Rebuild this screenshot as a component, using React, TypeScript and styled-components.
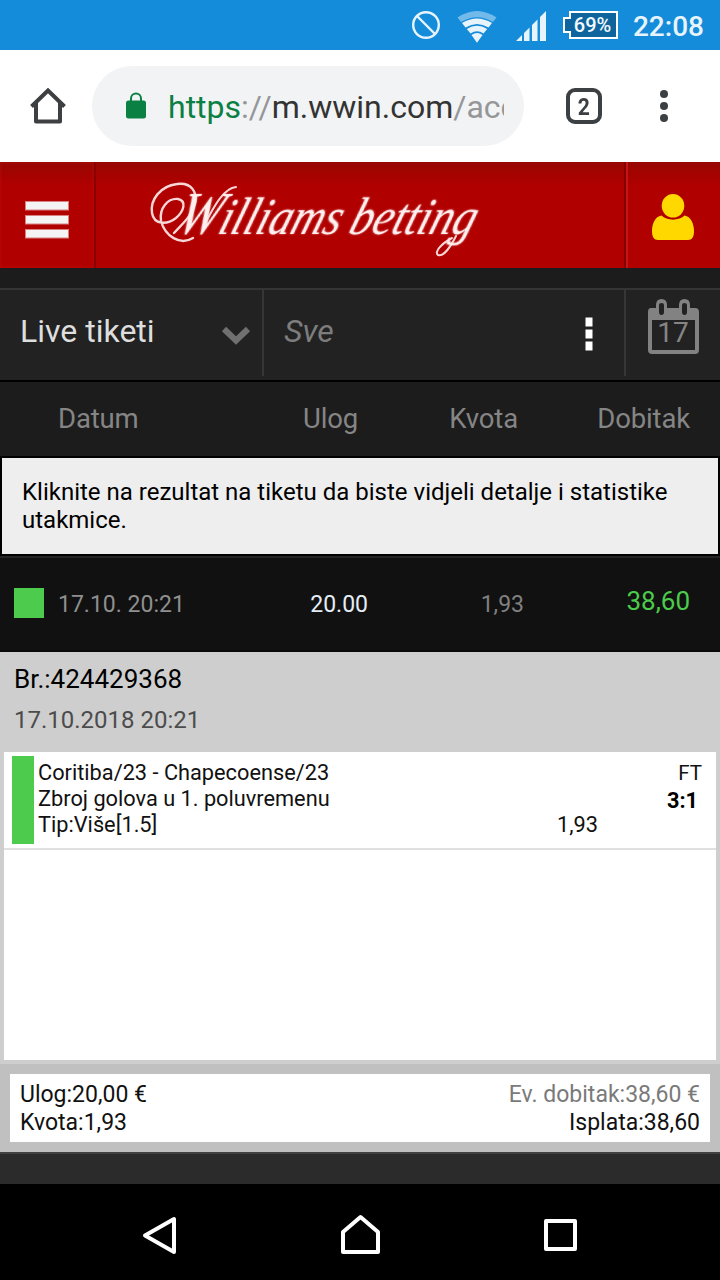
import React from "react";
import styled, { createGlobalStyle } from "styled-components";

const GlobalStyle = createGlobalStyle`
  *, *::before, *::after { box-sizing: border-box; }
  body { margin: 0; background: #000; font-family: Roboto, "Noto Sans", sans-serif; }
  svg { display: block; flex: none; }
`;

const Screen = styled.div`
  width: 720px;
  height: 1280px;
  display: flex;
  flex-direction: column;
  overflow: hidden;
  background: #2b2b2b;
`;

/* Android status bar */
const StatusBar = styled.header`
  height: 50px;
  flex: none;
  display: flex;
  align-items: center;
  justify-content: flex-end;
  padding-right: 16px;
  background: #148cda;
  color: #e8f4fc;
`;
const StatusIcons = styled.svg`
  width: 220px;
  height: 50px;
`;
const Clock = styled.span`
  margin-left: 13px;
  padding-top: 3px;
  font-size: 28px;
  font-weight: 500;
  line-height: 50px;
`;

/* Browser toolbar */
const BrowserBar = styled.div`
  height: 112px;
  flex: none;
  display: flex;
  align-items: center;
  background: #fff;
  padding-left: 30px;
`;
const AddressPill = styled.div`
  width: 432px;
  height: 80px;
  margin-left: 26px;
  padding: 0 20px 0 34px;
  display: flex;
  align-items: center;
  border-radius: 40px;
  background: #f1f3f5;
`;
const Url = styled.div`
  flex: 1;
  min-width: 0;
  margin-left: 22px;
  padding-top: 2px;
  overflow: hidden;
  white-space: nowrap;
  font-size: 32px;
  line-height: 44px;
  color: #333;
`;
const Scheme = styled.span`
  color: #0b8043;
`;
const Muted = styled.span`
  color: #959697;
`;
const TabCount = styled.div`
  width: 36px;
  height: 36px;
  margin-left: 42px;
  border: 4px solid #3c4043;
  border-radius: 9px;
  font: 700 24px/30px Roboto, sans-serif;
  text-align: center;
  color: #3c4043;
`;
const TabDigit = styled.span`
  display: inline-block;
  transform: scaleX(0.88);
`;
const DotsMenu = styled.svg`
  width: 8px;
  height: 36px;
  margin-left: 58px;
`;

/* Site header */
const SiteHeader = styled.div`
  height: 106px;
  flex: none;
  display: flex;
  background: linear-gradient(#960800, #a40300 12px, #b00000 24px);
`;
const HeaderButton = styled.div<{ $width: number }>`
  width: ${(p) => p.$width}px;
  display: flex;
  align-items: center;
  justify-content: center;
`;
const MenuButton = styled(HeaderButton)`
  border-right: 2px solid #8a0000;
  box-shadow: inset 0 0 4px rgba(220, 30, 30, 0.35);
  padding-top: 10px;
`;
const UserButton = styled(HeaderButton)`
  border-left: 2px solid #c51616;
  padding: 4px 2px 0 0;
`;
const Brand = styled.div`
  flex: 1;
  min-width: 0;
  border-right: 2px solid #860000;
`;

/* Filters */
const Filters = styled.div`
  height: 114px;
  flex: none;
  display: flex;
  background: #222;
  border-top: 20px solid #1c1c1c;
  border-bottom: 2px solid #000;
  box-shadow: inset 0 2px 0 #353535;
  padding-top: 2px;
`;
const Filter = styled.div<{ $width: number; $divider?: boolean }>`
  width: ${(p) => p.$width}px;
  height: 86px;
  display: flex;
  align-items: center;
  justify-content: space-between;
  padding-left: 20px;
  border-right: ${(p) => (p.$divider ? "2px solid #363636" : "0")};
`;
const FilterLabel = styled.span<{ $hint?: boolean }>`
  font-size: 32px;
  line-height: 38px;
  padding-bottom: 4px;
  color: ${(p) => (p.$hint ? "#7d7d7d" : "#dedede")};
  font-style: ${(p) => (p.$hint ? "italic" : "normal")};
`;

/* Ticket list */
const listColumns = "244px 128px 156px 162px";
const ListHead = styled.div`
  height: 76px;
  flex: none;
  display: grid;
  grid-template-columns: ${listColumns};
  align-items: center;
  padding-right: 30px;
  background: #1c1c1c;
  border-bottom: 2px solid #000;
`;
const HeadCell = styled.span<{ $align?: string }>`
  font-size: 27.5px;
  line-height: 34px;
  letter-spacing: -0.15px;
  color: #858585;
  text-align: ${(p) => p.$align ?? "left"};
`;
const OffsetHeadCell = styled(HeadCell)`
  padding-left: 58px;
`;
const KvotaHead = styled(HeadCell)`
  padding-right: 10px;
`;
const UlogHead = styled(HeadCell)`
  padding-right: 14px;
`;
const Notice = styled.p`
  height: 98px;
  flex: none;
  margin: 0;
  padding: 20px;
  border: 2px solid #000;
  border-top: 0;
  background: #eee;
  color: #000;
  font-size: 24px;
  line-height: 28px;
`;
const TicketRow = styled.div`
  height: 96px;
  flex: none;
  display: grid;
  grid-template-columns: 14px 44px 186px 128px 154px 164px;
  align-items: center;
  padding-right: 30px;
  background: #111;
  border-top: 2px solid #242424;
  border-bottom: 2px solid #090909;
`;
const Won = styled.span`
  grid-column: 2;
  width: 30px;
  height: 30px;
  margin-bottom: 2px;
  background: #4ccb4c;
`;
const Cell = styled.span<{ $color: string }>`
  padding-top: 2px;
  font-size: 23px;
  line-height: 28px;
  color: ${(p) => p.$color};
`;
const StakeCell = styled(Cell)`
  text-align: right;
  padding-right: 4px;
`;
const OddsCell = styled(Cell)`
  text-align: right;
  padding-right: 2px;
`;
const Payout = styled(Cell)`
  padding: 0 0 6px;
  font-size: 26px;
  text-align: right;
`;

/* Ticket detail */
const Detail = styled.section`
  height: 412px;
  flex: none;
  display: flex;
  flex-direction: column;
  padding: 10px 4px 4px;
  background: #cecece;
`;
const TicketNumber = styled.div`
  padding-left: 10px;
  font-size: 26px;
  line-height: 34px;
  color: #000;
`;
const TicketDate = styled.div`
  margin: 10px 0 18px;
  padding-left: 10px;
  font-size: 24px;
  line-height: 28px;
  color: #4c4c4c;
`;
const Bets = styled.div`
  flex: 1;
  background: #fff;
`;
const Bet = styled.div`
  height: 98px;
  display: flex;
  padding: 4px 14px 4px 8px;
  border-bottom: 2px solid #e0e0e0;
  color: #111;
  font-size: 21.75px;
  line-height: 26px;
`;
const WonBar = styled.div`
  width: 22px;
  height: 88px;
  background: #4ccb4c;
`;
const BetInfo = styled.div`
  width: 460px;
  padding: 4px 0 0 4px;
`;
const BetOdds = styled.div`
  width: 104px;
  padding-top: 56px;
  text-align: right;
`;
const BetResult = styled.div`
  flex: 1;
  padding-top: 4px;
  text-align: right;
  font-size: 20.5px;
`;
const Score = styled.strong`
  display: block;
  margin-top: 2px;
  padding-right: 4px;
  font-size: 21.75px;
  color: #000;
`;

/* Totals */
const Totals = styled.div`
  height: 90px;
  flex: none;
  padding: 10px;
  background: #c0c0c0;
  border-bottom: 2px solid #414141;
`;
const TotalsCard = styled.div`
  height: 68px;
  display: flex;
  justify-content: space-between;
  padding: 7px 10px 5px;
  background: #fff;
  color: #111;
  font-size: 23px;
  line-height: 28px;
`;
const TotalsColumn = styled.div<{ $right?: boolean }>`
  text-align: ${(p) => (p.$right ? "right" : "left")};
`;
const Expected = styled.div`
  color: #7a7a7a;
`;

const NavBar = styled.nav`
  height: 96px;
  flex: none;
  margin-top: auto;
  background: #000;
`;

const SignalIcons = () => (
  <StatusIcons viewBox="400 0 220 50">
    <g fill="none" stroke="#e8f4fc" strokeWidth="2.4">
      <circle cx="426" cy="25" r="12.8" />
      <path d="M417 16l18 18" />
    </g>
    <path d="M457.5 17.5Q477 4.500 496.500 17.5L493 22Q477 12.500 461 22Z" fill="#72baea" />
    <g fill="#e8f4fc">
      <path d="M462 23Q477 14 492 23L488.500 27.500Q477 20.500 465.500 27.500Z" />
      <path d="M466.800 29Q477 22.500 487.200 29L483.500 33.500Q477 29 470.500 33.500Z" />
      <path d="M471.500 35Q477 31 482.500 35L477 42.800Z" />
      <path d="M516 41l6-6v6zM524 41v-8l5.500-5.500v13.500zM532 41V25l5.500-5.500v21.500zM540 41V17l6-6v30z" />
    </g>
    <path d="M570 12H617V38H570V32H564V18H570Z" fill="#0e659d" stroke="#fff" strokeWidth="2" />
    <text x="592.500" y="32" textAnchor="middle" fontFamily="Roboto" fontWeight="500" fontSize="20" fill="#f2f9fe">69%</text>
  </StatusIcons>
);

const HomeIcon = () => (
  <svg width="36" height="36" viewBox="0 0 36 36" fill="none" stroke="#3c4043" strokeWidth="4">
    <path d="M1.500 18.500L18 2.500L34.500 18.500" strokeLinejoin="miter" />
    <path d="M6 15V33.500H30V15" strokeLinejoin="round" />
  </svg>
);

const LockIcon = () => (
  <svg width="20" height="28" viewBox="0 0 20 28">
    <rect y="8.500" width="20" height="18" rx="2.500" fill="#0b8043" />
    <path d="M5 10V6.500a5 5 0 0 1 10 0V10" fill="none" stroke="#0b8043" strokeWidth="2" />
  </svg>
);

const LogoText = styled.text`
  font-family: "Liberation Serif", serif;
  font-style: italic;
  fill: #fff0f0;
  filter: drop-shadow(0 0 1px rgba(255, 200, 200, 0.6));
`;

const Logo = () => (
  <svg width="529" height="106" viewBox="96 162 529 106">
    <g fill="none" stroke="#f6d6d6" strokeWidth="2.4" strokeLinecap="round">
      <path d="M193 238C180 246 165 236 161 221C159 208 168 198 178 199C187 201 184 211 176 218C167 225 154 225 152 213C150 200 160 186 177 184C191 182 198 192 195 204C192 216 182 224 174 233" />
      <path d="M205 224C214 206 224 188 236 187" strokeWidth="2" />
      <path d="M456 236C450 248 443 257 438 255C434 252 441 244 452 238" strokeWidth="2" />
    </g>
    <LogoText textLength="164" lengthAdjust="spacingAndGlyphs" transform="translate(174 234) skewX(-18)">
      <tspan fontSize="60">W</tspan>
      <tspan fontSize="53">illiams</tspan>
    </LogoText>
    <LogoText fontSize="52" textLength="125" lengthAdjust="spacingAndGlyphs" transform="translate(347 234) skewX(-18)">
      betting
    </LogoText>
  </svg>
);

const HamburgerIcon = () => (
  <svg width="44" height="38" viewBox="0 0 44 38" fill="#f4f4f4" stroke="#d98080" strokeWidth="1">
    <rect x="0.500" y="0.500" width="43" height="8.500" />
    <rect x="0.500" y="14.500" width="43" height="8.500" />
    <rect x="0.500" y="28.500" width="43" height="8.500" />
  </svg>
);

const UserIcon = () => (
  <svg width="42" height="46" viewBox="0 0 42 46" fill="#ffd800">
    <ellipse cx="21" cy="11.800" rx="11.300" ry="11.800" />
    <path d="M9.500 21.500C14.500 27 27.500 27 32.500 21.500C39 22.500 42 30 42 37C42 43 40 46 36 46H6C2 46 0 43 0 37C0 30 3 22.500 9.500 21.500Z" />
  </svg>
);

const Chevron = styled.svg`
  width: 30px;
  height: 20px;
  margin: 4px 11px 0 0;
`;
const MoreDots = styled.svg`
  width: 8px;
  height: 34px;
  margin: 2px 31px 0 0;
`;
const Calendar = styled.svg`
  width: 54px;
  height: 56px;
  margin: -12px 21px 0 1px;
`;

export default function App() {
  return (
    <Screen>
      <GlobalStyle />
      <StatusBar>
        <SignalIcons />
        <Clock>22:08</Clock>
      </StatusBar>

      <BrowserBar>
        <HomeIcon />
        <AddressPill>
          <LockIcon />
          <Url>
            <Scheme>https</Scheme>
            <Muted>://</Muted>m.wwin.com<Muted>/acc</Muted>
          </Url>
        </AddressPill>
        <TabCount>
          <TabDigit>2</TabDigit>
        </TabCount>
        <DotsMenu viewBox="0 0 8 36" fill="#3c4043">
          <circle cx="4" cy="6" r="4" />
          <circle cx="4" cy="18" r="4" />
          <circle cx="4" cy="30" r="4" />
        </DotsMenu>
      </BrowserBar>

      <SiteHeader>
        <MenuButton $width={96}>
          <HamburgerIcon />
        </MenuButton>
        <Brand>
          <Logo />
        </Brand>
        <UserButton $width={94}>
          <UserIcon />
        </UserButton>
      </SiteHeader>

      <Filters>
        <Filter $width={264} $divider>
          <FilterLabel>Live tiketi</FilterLabel>
          <Chevron viewBox="0 0 30 20">
            <path d="M3 4L15 15.500L27 4" fill="none" stroke="#707070" strokeWidth="6" />
          </Chevron>
        </Filter>
        <Filter $width={362} $divider>
          <FilterLabel $hint>Sve</FilterLabel>
          <MoreDots viewBox="0 0 8 34" fill="#fff">
            <rect x="0.500" y="0.500" width="7" height="9" />
            <rect x="0.500" y="12.500" width="7" height="9" />
            <rect x="0.500" y="24.500" width="7" height="9" />
          </MoreDots>
        </Filter>
        <Filter $width={94}>
          <Calendar viewBox="0 0 54 56">
            <path
              fillRule="evenodd"
              fill="#828282"
              d="M4 9H9V6Q9 0 14.500 0Q20 0 20 6V9H32V6Q32 0 37.500 0Q43 0 43 6V9H48Q52 9 52 13V51Q52 55 48 55H5Q1 55 1 51V13Q1 9 4 9ZM5 21V51H48V21ZM12 6V13Q12 16 14.500 16Q17 16 17 13V6Q17 4 14.500 4Q12 4 12 6ZM35 6V13Q35 16 37.500 16Q40 16 40 13V6Q40 4 37.500 4Q35 4 35 6Z"
            />
            <text x="26" y="43" textAnchor="middle" fontFamily="Roboto" fontSize="28" fill="#858585">17</text>
          </Calendar>
        </Filter>
      </Filters>

      <ListHead>
        <OffsetHeadCell>Datum</OffsetHeadCell>
        <UlogHead $align="right">Ulog</UlogHead>
        <KvotaHead $align="right">Kvota</KvotaHead>
        <HeadCell $align="right">Dobitak</HeadCell>
      </ListHead>
      <Notice>Kliknite na rezultat na tiketu da biste vidjeli detalje i statistike utakmice.</Notice>
      <TicketRow>
        <Won />
        <Cell $color="#8f8f8f">17.10. 20:21</Cell>
        <StakeCell $color="#e4edf5">20.00</StakeCell>
        <OddsCell $color="#808080">1,93</OddsCell>
        <Payout $color="#4ccb4c">38,60</Payout>
      </TicketRow>

      <Detail>
        <TicketNumber>Br.:424429368</TicketNumber>
        <TicketDate>17.10.2018 20:21</TicketDate>
        <Bets>
          <Bet>
            <WonBar />
            <BetInfo>
              <div>Coritiba/23 - Chapecoense/23</div>
              <div>Zbroj golova u 1. poluvremenu</div>
              <div>Tip:Više[1.5]</div>
            </BetInfo>
            <BetOdds>1,93</BetOdds>
            <BetResult>
              FT
              <Score>3:1</Score>
            </BetResult>
          </Bet>
        </Bets>
      </Detail>

      <Totals>
        <TotalsCard>
          <TotalsColumn>
            <div>Ulog:20,00 €</div>
            <div>Kvota:1,93</div>
          </TotalsColumn>
          <TotalsColumn $right>
            <Expected>Ev. dobitak:38,60 €</Expected>
            <div>Isplata:38,60</div>
          </TotalsColumn>
        </TotalsCard>
      </Totals>

      <NavBar>
        <svg width="720" height="96" viewBox="0 1184 720 96" fill="none" stroke="#fff" strokeWidth="4" strokeLinejoin="round">
          <path d="M174 1219V1252L145 1235.500Z" />
          <path d="M343 1252V1232L360.500 1217L378 1232V1252Z" />
          <rect x="546" y="1221" width="29" height="28" />
        </svg>
      </NavBar>
    </Screen>
  );
}
